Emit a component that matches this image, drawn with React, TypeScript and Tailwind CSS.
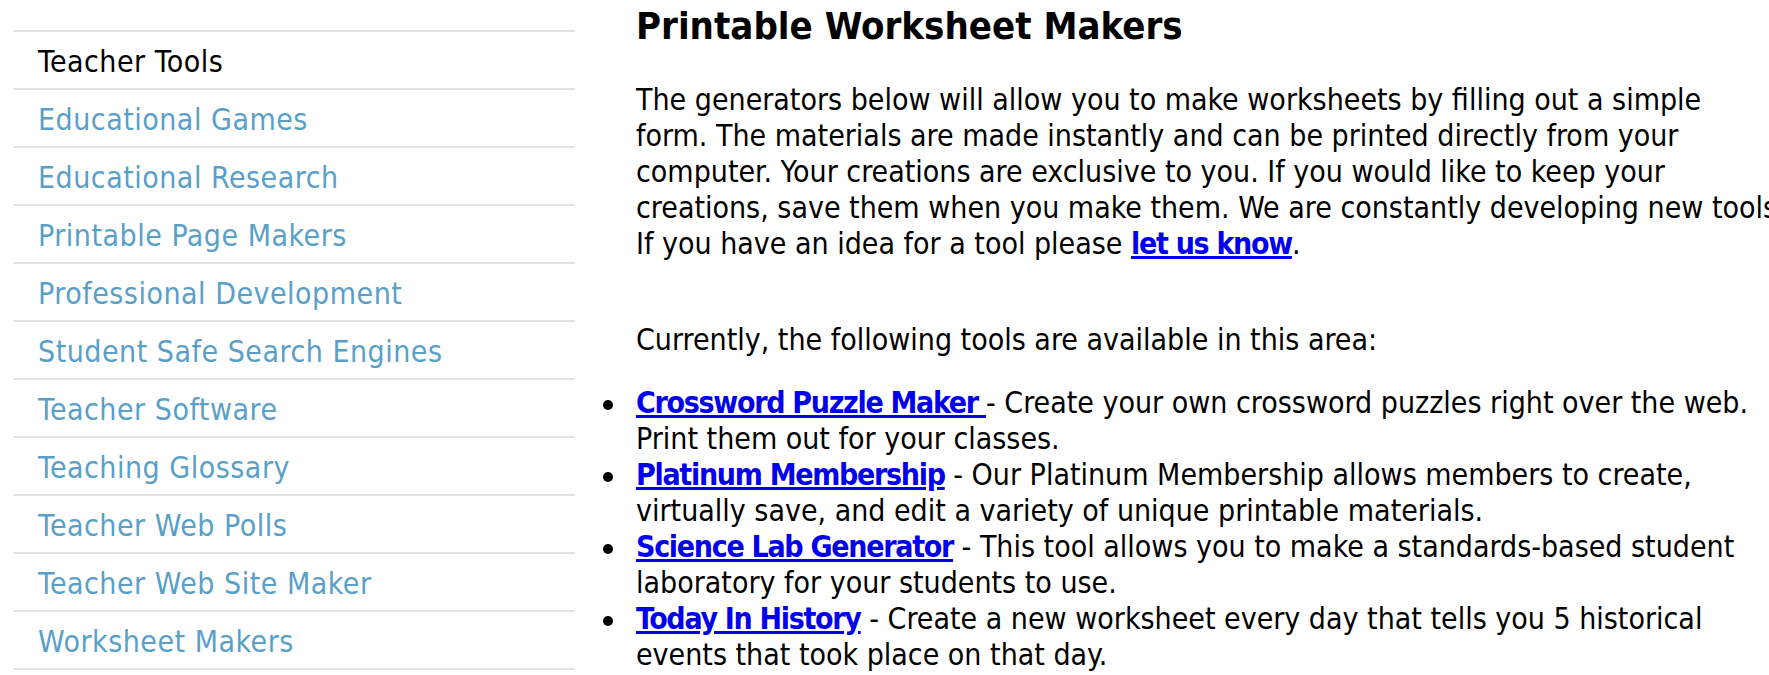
const sideLinks = [
  "Educational Games",
  "Educational Research",
  "Printable Page Makers",
  "Professional Development",
  "Student Safe Search Engines",
  "Teacher Software",
  "Teaching Glossary",
  "Teacher Web Polls",
  "Teacher Web Site Maker",
  "Worksheet Makers",
];

const tools = [
  {
    name: "Crossword Puzzle Maker ",
    line1: " - Create your own crossword puzzles right over the web.",
    line2: "Print them out for your classes.",
  },
  {
    name: "Platinum Membership",
    line1: " - Our Platinum Membership allows members to create,",
    line2: "virtually save, and edit a variety of unique printable materials.",
  },
  {
    name: "Science Lab Generator",
    line1: " - This tool allows you to make a standards-based student",
    line2: "laboratory for your students to use.",
  },
  {
    name: "Today In History",
    line1: " - Create a new worksheet every day that tells you 5 historical",
    line2: "events that took place on that day.",
  },
];

export default function App() {
  return (
    <div className="w-[1769px] h-[675px] overflow-hidden bg-white text-black font-['DejaVu_Sans_Condensed','DejaVu_Sans',sans-serif] font-stretch-condensed text-[30px] leading-[36px]">
      <div className="flex items-start">
        {/* Sidebar */}
        <aside className="w-[562px] ml-[13px] mt-[30px] shrink-0 border-b-2 border-[#e3e3e3]">
          <div className="border-t-2 border-[#e3e3e3] pl-[25px] pt-[12px] pb-[8px] tracking-[0.5px] text-black">
            Teacher Tools
          </div>
          {sideLinks.map((label) => (
            <div key={label} className="border-t-2 border-[#e3e3e3] pl-[25px] pt-[12px] pb-[8px] tracking-[0.5px]">
              <a href="#" className="text-[#5a9fc8]">
                {label}
              </a>
            </div>
          ))}
        </aside>

        {/* Main */}
        <main className="ml-[61px] w-[1139px] shrink-0 whitespace-nowrap">
          <h1 className="mt-[3px] text-[38px] leading-[46px] font-bold">Printable Worksheet Makers</h1>
          <p className="mt-[33px]">
            The generators below will allow you to make worksheets by filling out a simple
            <br />
            form. The materials are made instantly and can be printed directly from your
            <br />
            computer. Your creations are exclusive to you. If you would like to keep your
            <br />
            creations, save them when you make them. We are constantly developing new tools.
            <br />
            If you have an idea for a tool please{" "}
            <a href="#" className="font-bold underline tracking-[-1.3px] text-[#0000ee]">
              let us know
            </a>
            .
          </p>
          <p className="mt-[60px]">Currently, the following tools are available in this area:</p>
          <ul className="mt-[27px] ml-[-33px]">
            {tools.map((t) => (
              <li key={t.name} className="flex">
                <span className="w-[33px] shrink-0 pt-[15px]">
                  <span className="block w-[10px] h-[10px] rounded-full bg-black" />
                </span>
                <span>
                  <a href="#" className="font-bold underline tracking-[-1.3px] text-[#0000ee]">
                    {t.name}
                  </a>
                  {t.line1}
                  <br />
                  {t.line2}
                </span>
              </li>
            ))}
          </ul>
        </main>
      </div>
    </div>
  );
}
